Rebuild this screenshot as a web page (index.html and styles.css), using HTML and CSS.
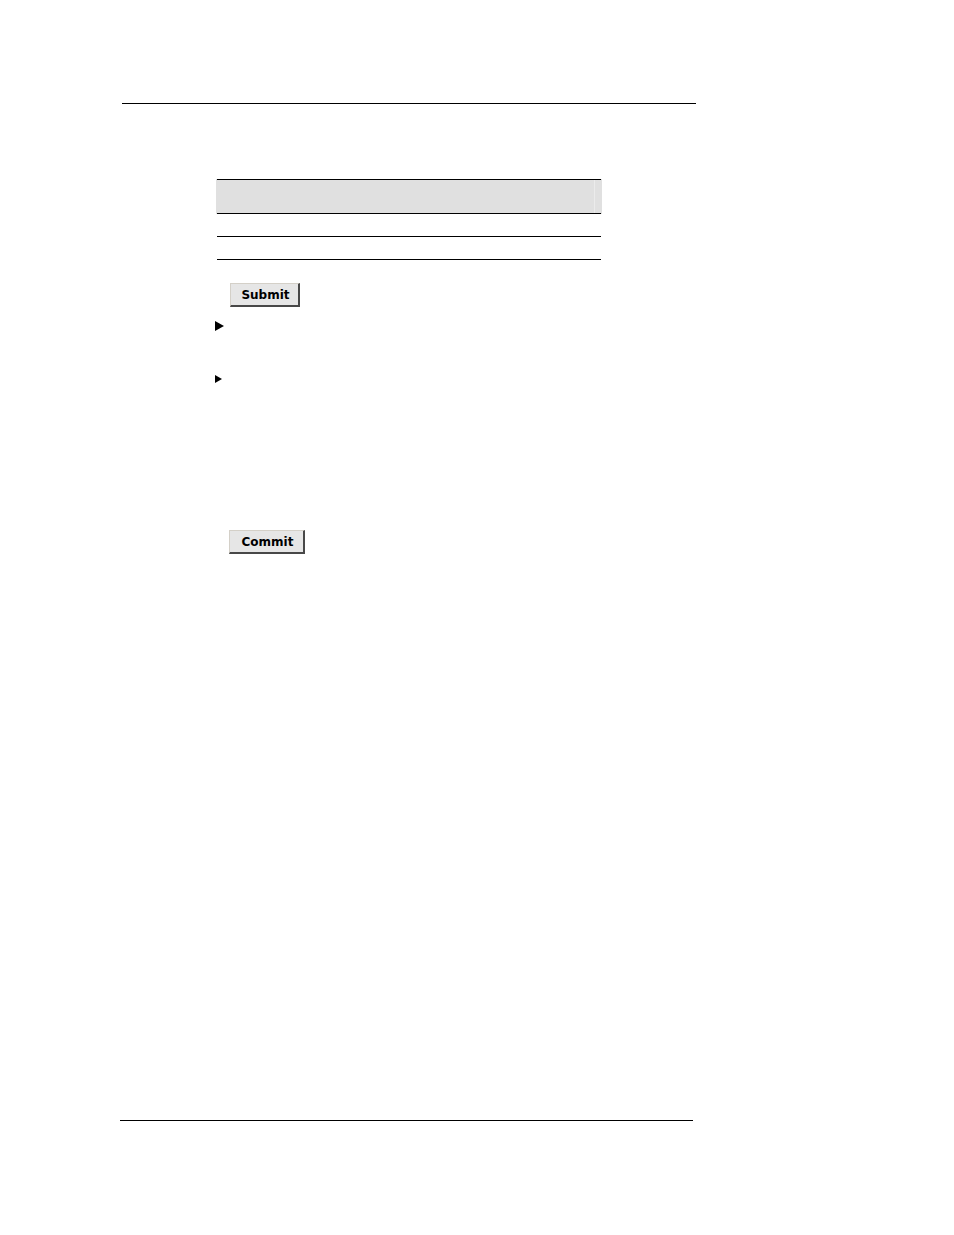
FILE: index.html
```html
<!DOCTYPE html>
<html lang="en">
<head>
<meta charset="utf-8">
<title>Document page</title>
<link rel="stylesheet" href="styles.css">
</head>
<body>
<div class="page">
  <header class="rule"></header>
  <main class="content">
    <table class="grid">
      <thead>
        <tr><th></th><th class="edge"></th></tr>
      </thead>
      <tbody>
        <tr><td></td><td></td></tr>
        <tr><td></td><td></td></tr>
      </tbody>
    </table>
    <button class="btn submit" type="button">Submit</button>
    <svg class="arrow large" viewBox="0 0 9 10" aria-hidden="true"><path d="M0 0L9 5L0 10Z"/></svg>
    <svg class="arrow small" viewBox="0 0 7 8" aria-hidden="true"><path d="M0 0L7 4L0 8Z"/></svg>
    <button class="btn commit" type="button">Commit</button>
  </main>
  <footer class="rule foot"></footer>
</div>
</body>
</html>
```

FILE: styles.css
```css
* {
  box-sizing: border-box;
}

body {
  margin: 0;
  background: #fff;
  color: #000;
  font-family: "DejaVu Sans", Verdana, sans-serif;
}

.page {
  display: flex;
  flex-direction: column;
  min-height: 100vh;
  padding: 103px 258px 114px 122px;
}

.rule {
  border-top: 1px solid #000;
}

.foot {
  margin: auto 3px 0 -2px;
}

.content {
  display: flex;
  flex-direction: column;
  align-items: flex-start;
  padding: 75px 95px 0 93px;
}

.grid {
  align-self: stretch;
  margin-left: 2px;
  table-layout: fixed;
  border-spacing: 0;
}

.grid th,
.grid td {
  height: 23px;
  padding: 0;
  border-bottom: 1px solid #000;
}

.grid th {
  height: 35px;
  border-top: 1px solid #000;
  background: #e0e0e0;
  box-shadow: -1px 0 #e0e0e0;
}

.grid .edge {
  width: 7px;
  box-shadow: inset 1px 0 #ebebeb, 1px 0 #e0e0e0;
}

.btn {
  height: 24px;
  padding: 0 8px 0 10px;
  border: 1px solid #d4d0c8;
  border-right: 2px solid #484848;
  border-bottom: 2px solid #484848;
  background: #e6e6e6;
  color: #000;
  font: bold 12px/20px "DejaVu Sans", Verdana, sans-serif;
}

.submit {
  min-width: 70px;
  margin: 23px 0 0 15px;
}

.commit {
  min-width: 76px;
  margin: 147px 0 0 14px;
}

.large {
  width: 9px;
  height: 10px;
  margin-top: 14px;
}

.small {
  width: 7px;
  height: 8px;
  margin-top: 44px;
}
```
